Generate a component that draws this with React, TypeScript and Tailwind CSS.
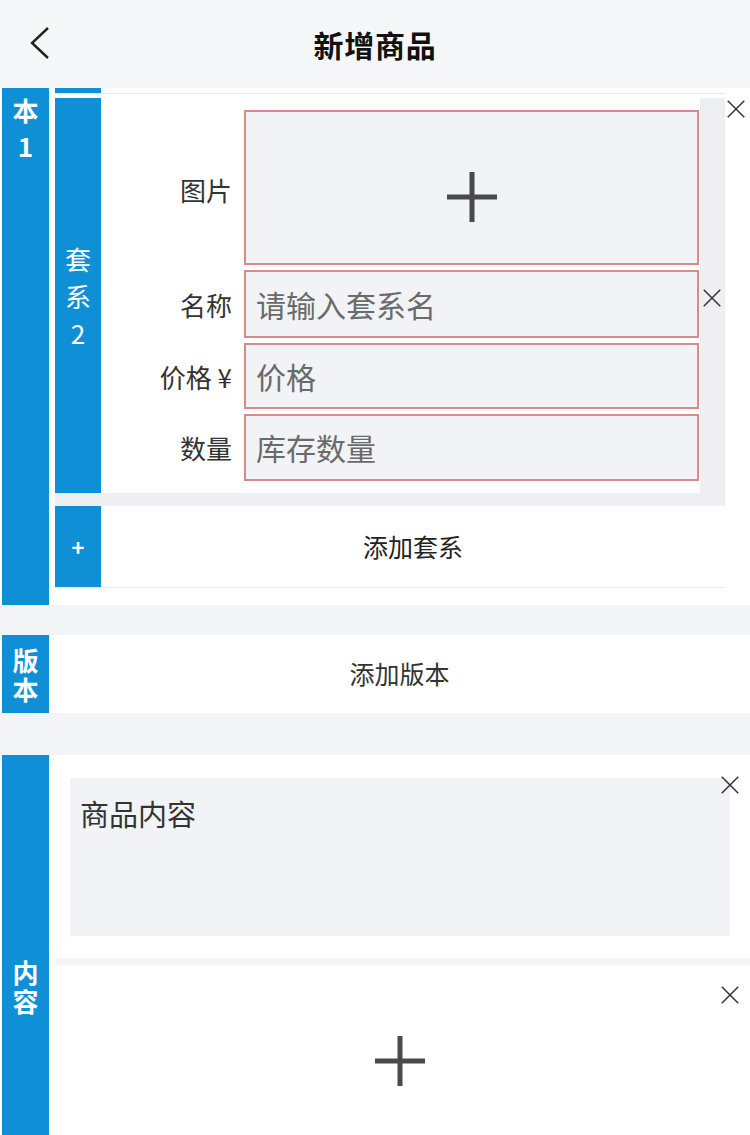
import React from 'react';

const BLUE = 'bg-[#0f8fd6]';

function CloseIcon({ className }: { className?: string }) {
  return (
    <svg viewBox="0 0 24 24" className={className} fill="none" stroke="#333" strokeWidth="1.6">
      <path d="M3 3 L21 21 M21 3 L3 21" />
    </svg>
  );
}

function PlusIcon({ size, stroke }: { size: number; stroke: number }) {
  return (
    <svg width={size} height={size} viewBox={`0 0 ${size} ${size}`} fill="none" stroke="#4a4a4d" strokeWidth={stroke}>
      <path d={`M${size / 2} 0 V${size} M0 ${size / 2} H${size}`} />
    </svg>
  );
}

// vertical label: one text node that wraps one glyph per line
function SideLabel({ text, bold = true, leading }: { text: string; bold?: boolean; leading: string }) {
  return (
    <span className={`w-[27px] break-all text-center text-white text-[26px] ${leading} ${bold ? 'font-bold' : ''}`}>
      {text}
    </span>
  );
}

function FieldRow({ label, placeholder, h }: { label: string; placeholder: string; h: string }) {
  return (
    <div className="flex items-center">
      <div className="w-[143px] pr-[12px] text-right text-[26px] text-[#333]">{label}</div>
      <div className={`flex-1 ${h} border-2 border-[#d98a8a] bg-[#f2f3f6] flex items-center pl-[10px] text-[30px] text-[#6a6a6a]`}>
        {placeholder}
      </div>
    </div>
  );
}

export default function App() {
  return (
    <div className="min-h-screen bg-[#f3f4f7] overflow-hidden" style={{ fontFamily: '"Noto Sans CJK SC", "Noto Sans", sans-serif' }}>
      {/* Header */}
      <div className="relative h-[88px] bg-[#f5f6f8] flex items-center justify-center">
        <svg className="absolute left-[28px] top-[26px]" width="24" height="34" viewBox="0 0 24 34" fill="none" stroke="#222" strokeWidth="2.4">
          <path d="M20 2 L4 17 L20 32" />
        </svg>
        <h1 className="text-[30px] font-bold text-[#111] tracking-wide">新增商品</h1>
      </div>

      {/* Version 1 */}
      <div className="relative bg-white flex">
        <div className={`ml-[2px] w-[47px] ${BLUE} flex flex-col items-center pt-[4px]`}>
          <SideLabel text="本1" leading="leading-[36px]" />
        </div>
        <div className="ml-[6px] w-[670px] pb-[17px]">
          {/* previous set tail */}
          <div className="flex h-[5px]">
            <div className={`w-[46px] ${BLUE}`} />
          </div>
          <div className="h-[5px] border-t border-[#e6e8ec]" />

          {/* Set 2 card */}
          <div className="relative bg-[#edeff2] pr-[25px] pb-[13px]">
            <div className="flex bg-white">
              <div className={`w-[46px] ${BLUE} flex flex-col items-center justify-center`}>
                <SideLabel text="套系2" bold={false} leading="leading-[37px]" />
              </div>
              <div className="flex-1 pt-[12px] pb-[12px] pr-[1px] flex flex-col gap-[5px]">
                <div className="flex items-center">
                  <div className="w-[143px] pr-[12px] text-right text-[26px] text-[#333] mt-[4px]">图片</div>
                  <div className="flex-1 h-[155px] border-2 border-[#d98a8a] bg-[#f2f3f6] flex items-center justify-center pt-[18px]">
                    <PlusIcon size={50} stroke={5} />
                  </div>
                </div>
                <FieldRow label="名称" placeholder="请输入套系名" h="h-[68px]" />
                <FieldRow label="价格 ¥" placeholder="价格" h="h-[66px]" />
                <FieldRow label="数量" placeholder="库存数量" h="h-[67px]" />
              </div>
            </div>
            <CloseIcon className="absolute right-[2px] top-[189px] w-[22px] h-[22px]" />
          </div>

          {/* Add set */}
          <div className="flex h-[82px] border-b border-[#e8eaee]">
            <div className={`w-[46px] ${BLUE} flex items-center justify-center text-white text-[22px] font-bold`}>+</div>
            <div className="flex-1 flex items-center justify-center text-[25px] text-[#222]">添加套系</div>
          </div>
        </div>
        <CloseIcon className="absolute right-[3px] top-[10px] w-[22px] h-[22px]" />
      </div>

      <div className="h-[30px]" />

      {/* Add version */}
      <div className="flex h-[78px] bg-white">
        <div className={`ml-[2px] w-[47px] ${BLUE} flex flex-col items-center justify-center`}>
          <SideLabel text="版本" leading="leading-[29px]" />
        </div>
        <div className="flex-1 flex items-center justify-center text-[25px] text-[#333]">添加版本</div>
      </div>

      <div className="h-[42px]" />

      {/* Content */}
      <div className="flex bg-white h-[462px]">
        <div className={`ml-[2px] w-[47px] ${BLUE} flex flex-col items-center justify-center`}>
          <SideLabel text="内容" leading="leading-[29px]" />
        </div>
        <div className="flex-1 flex flex-col">
          <div className="relative pt-[23px] pl-[21px] pr-[20px] pb-[22px]">
            <div className="h-[158px] bg-[#f2f3f6] px-[10px] pt-[14px] text-[29px] text-[#333]">商品内容</div>
            <CloseIcon className="absolute right-[9px] top-[19px] w-[22px] h-[22px]" />
          </div>
          <div className="h-[7px] bg-[#f2f4f7] ml-[6px]" />
          <div className="relative flex-1 flex justify-center pt-[71px]">
            <PlusIcon size={50} stroke={5} />
            <CloseIcon className="absolute right-[9px] top-[19px] w-[22px] h-[22px]" />
          </div>
        </div>
      </div>
    </div>
  );
}
